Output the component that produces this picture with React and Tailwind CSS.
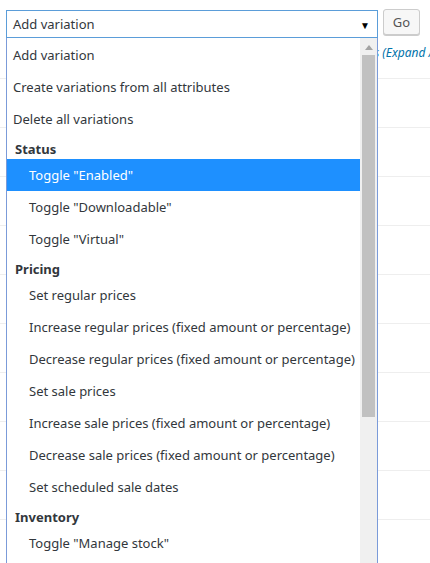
import React from "react";

const font = { fontFamily: '"Noto Sans", "Open Sans", sans-serif' };

function Option({ label, indent, active }) {
  return (
    <div
      className={
        "h-[32px] flex items-center pt-[2px] whitespace-nowrap text-[13px] " +
        (indent ? "pl-[22px] " : "pl-[6px] ") +
        (active ? "bg-[#1e90ff] text-white" : "text-[#32373c]")
      }
    >
      {label}
    </div>
  );
}

function Header({ label }) {
  return (
    <div className="h-[24px] flex items-center pt-[5px] pl-[8px] text-[13px] font-bold text-[#32373c]">
      {label}
    </div>
  );
}

export default function App() {
  const rows = Array.from({ length: 10 });
  return (
    <div className="relative w-[430px] h-[563px] overflow-hidden bg-white" style={font}>
      {/* background page */}
      <div className="flex items-start pt-[9px] pl-[6px] gap-[5px]">
        <div className="w-[372px] h-[28px] mt-[1px] border border-[#5b9dd9] bg-white flex items-center justify-between pt-[2px] pl-[6px] pr-[7px] text-[13px] text-[#32373c]">
          <span>Add variation</span>
          <span className="text-[10px] text-black leading-none">▼</span>
        </div>
        <button className="w-[37px] h-[26px] rounded-[3px] border border-[#cccccc] bg-[#f7f7f7] text-[13px] text-[#555] shadow-[0_1px_0_#ccc] flex items-center justify-center pt-[1px]">
          Go
        </button>
      </div>
      <div className="h-[40px] pl-[374px] pb-[10px] flex items-center whitespace-nowrap text-[12px] italic text-[#0073aa] overflow-hidden">
        s (Expand / Close)
      </div>
      <div>
        {rows.map((_, i) => (
          <div key={i} className="h-[49px] border-t border-[#eeeeee]" />
        ))}
      </div>

      {/* dropdown list */}
      <div className="absolute left-[6px] top-[38px] w-[372px] h-[540px] bg-white border-x border-[#7b9bd9] flex">
        <div className="flex-1 pt-[1px]">
          <Option label="Add variation" />
          <Option label="Create variations from all attributes" />
          <Option label="Delete all variations" />
          <Header label="Status" />
          <Option indent active label={'Toggle "Enabled"'} />
          <Option indent label={'Toggle "Downloadable"'} />
          <Option indent label={'Toggle "Virtual"'} />
          <Header label="Pricing" />
          <Option indent label="Set regular prices" />
          <Option indent label="Increase regular prices (fixed amount or percentage)" />
          <Option indent label="Decrease regular prices (fixed amount or percentage)" />
          <Option indent label="Set sale prices" />
          <Option indent label="Increase sale prices (fixed amount or percentage)" />
          <Option indent label="Decrease sale prices (fixed amount or percentage)" />
          <Option indent label="Set scheduled sale dates" />
          <Header label="Inventory" />
          <Option indent label={'Toggle "Manage stock"'} />
        </div>
        <div className="w-[17px] bg-[#f0f0f0] flex flex-col items-center pt-[1px]">
          <div className="h-[16px] flex items-center justify-center">
            <svg width="8" height="5" viewBox="0 0 8 5">
              <path d="M0 5 L4 0 L8 5 Z" fill="#a3a3a3" />
            </svg>
          </div>
          <div className="w-[13px] h-[362px] bg-[#c1c1c1]" />
        </div>
      </div>
    </div>
  );
}
